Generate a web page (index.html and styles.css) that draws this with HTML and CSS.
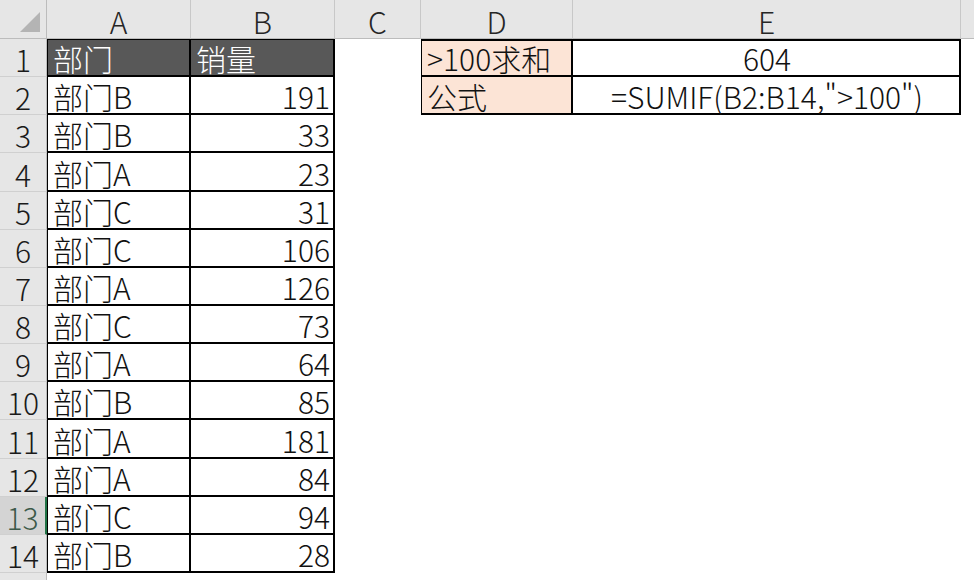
FILE: index.html
```html
<!DOCTYPE html>
<html lang="zh">
<head>
<meta charset="utf-8">
<link rel="stylesheet" href="styles.css">
</head>
<body>
<div class="sheet">
  <div class="ch corner"><span class="tri"></span></div>
  <div class="ch">A</div>
  <div class="ch">B</div>
  <div class="ch">C</div>
  <div class="ch">D</div>
  <div class="ch">E</div>
  <div class="ch last"></div>

  <div class="rh">1</div>
  <div class="c b bl bt dark">部门</div>
  <div class="c b bt dark">销量</div>
  <div class="c"></div>
  <div class="c b bl bt2 peach">&gt;100求和</div>
  <div class="c b bt2 center">604</div>
  <div class="c"></div>

  <div class="rh">2</div>
  <div class="c b bl">部门B</div>
  <div class="c b num">191</div>
  <div class="c"></div>
  <div class="c b bl peach">公式</div>
  <div class="c b center">=SUMIF(B2:B14,"&gt;100")</div>
  <div class="c"></div>

  <div class="rh">3</div>
  <div class="c b bl">部门B</div>
  <div class="c b num">33</div>
  <div class="c"></div><div class="c"></div><div class="c"></div><div class="c"></div>

  <div class="rh">4</div>
  <div class="c b bl">部门A</div>
  <div class="c b num">23</div>
  <div class="c"></div><div class="c"></div><div class="c"></div><div class="c"></div>

  <div class="rh">5</div>
  <div class="c b bl">部门C</div>
  <div class="c b num">31</div>
  <div class="c"></div><div class="c"></div><div class="c"></div><div class="c"></div>

  <div class="rh">6</div>
  <div class="c b bl">部门C</div>
  <div class="c b num">106</div>
  <div class="c"></div><div class="c"></div><div class="c"></div><div class="c"></div>

  <div class="rh">7</div>
  <div class="c b bl">部门A</div>
  <div class="c b num">126</div>
  <div class="c"></div><div class="c"></div><div class="c"></div><div class="c"></div>

  <div class="rh">8</div>
  <div class="c b bl">部门C</div>
  <div class="c b num">73</div>
  <div class="c"></div><div class="c"></div><div class="c"></div><div class="c"></div>

  <div class="rh">9</div>
  <div class="c b bl">部门A</div>
  <div class="c b num">64</div>
  <div class="c"></div><div class="c"></div><div class="c"></div><div class="c"></div>

  <div class="rh">10</div>
  <div class="c b bl">部门B</div>
  <div class="c b num">85</div>
  <div class="c"></div><div class="c"></div><div class="c"></div><div class="c"></div>

  <div class="rh">11</div>
  <div class="c b bl">部门A</div>
  <div class="c b num">181</div>
  <div class="c"></div><div class="c"></div><div class="c"></div><div class="c"></div>

  <div class="rh">12</div>
  <div class="c b bl">部门A</div>
  <div class="c b num">84</div>
  <div class="c"></div><div class="c"></div><div class="c"></div><div class="c"></div>

  <div class="rh sel">13</div>
  <div class="c b bl">部门C</div>
  <div class="c b num">94</div>
  <div class="c"></div><div class="c"></div><div class="c"></div><div class="c"></div>

  <div class="rh">14</div>
  <div class="c b bl">部门B</div>
  <div class="c b num">28</div>
  <div class="c"></div><div class="c"></div><div class="c"></div><div class="c"></div>

  <div class="rh"></div>
  <div class="c"></div><div class="c"></div><div class="c"></div><div class="c"></div><div class="c"></div><div class="c"></div>
</div>
</body>
</html>
```

FILE: styles.css
```css
html, body {
  margin: 0;
  padding: 0;
  background: #ffffff;
}
body {
  width: 974px;
  height: 580px;
  overflow: hidden;
  font-family: "Noto Sans CJK SC", sans-serif;
  font-weight: 300;
  font-size: 30px;
  color: #111;
}
.sheet {
  display: grid;
  grid-template-columns: 47px 144px 144px 86px 152px 388px 40px;
  grid-template-rows: 39px repeat(14, 38.15px) 30px;
  width: 1001px;
}
.sheet > div {
  box-sizing: border-box;
  min-width: 0;
  white-space: nowrap;
}
.ch {
  background: #e6e6e6;
  border-right: 1px solid #c8c8c8;
  border-bottom: 1px solid #bcbcbc;
  display: flex;
  align-items: flex-end;
  justify-content: center;
  line-height: 34px;
  color: #262626;
}
.ch.corner {
  position: relative;
  border-right: 1px solid #bcbcbc;
}
.tri {
  position: absolute;
  right: 6px;
  bottom: 6px;
  width: 0;
  height: 0;
  border-left: 20px solid transparent;
  border-bottom: 20px solid #b4b4b4;
}
.ch.last {
  border-right: none;
}
.rh {
  background: #e6e6e6;
  border-right: 1px solid #bcbcbc;
  border-bottom: 1px solid #d0d0d0;
  display: flex;
  align-items: flex-end;
  justify-content: center;
  line-height: 34px;
  color: #1a1a1a;
}
.rh.sel {
  background: #d4d4d4;
  color: #3d5a4a;
  border-right: 2px solid #217346;
}
.c {
  background: #ffffff;
  display: flex;
  align-items: flex-end;
  padding: 0 3px 0 5px;
  line-height: 34px;
}
.b {
  border-right: 2px solid #000;
  border-bottom: 2px solid #000;
}
.bl {
  border-left: 1px solid #000;
}
.bt {
  border-top: 1px solid #000;
}
.bt2 {
  border-top: 2px solid #000;
}
.num {
  justify-content: flex-end;
}
.center {
  justify-content: center;
}
.dark {
  background: #585858;
  color: #ffffff;
}
.peach {
  background: #fce4d6;
}
```
